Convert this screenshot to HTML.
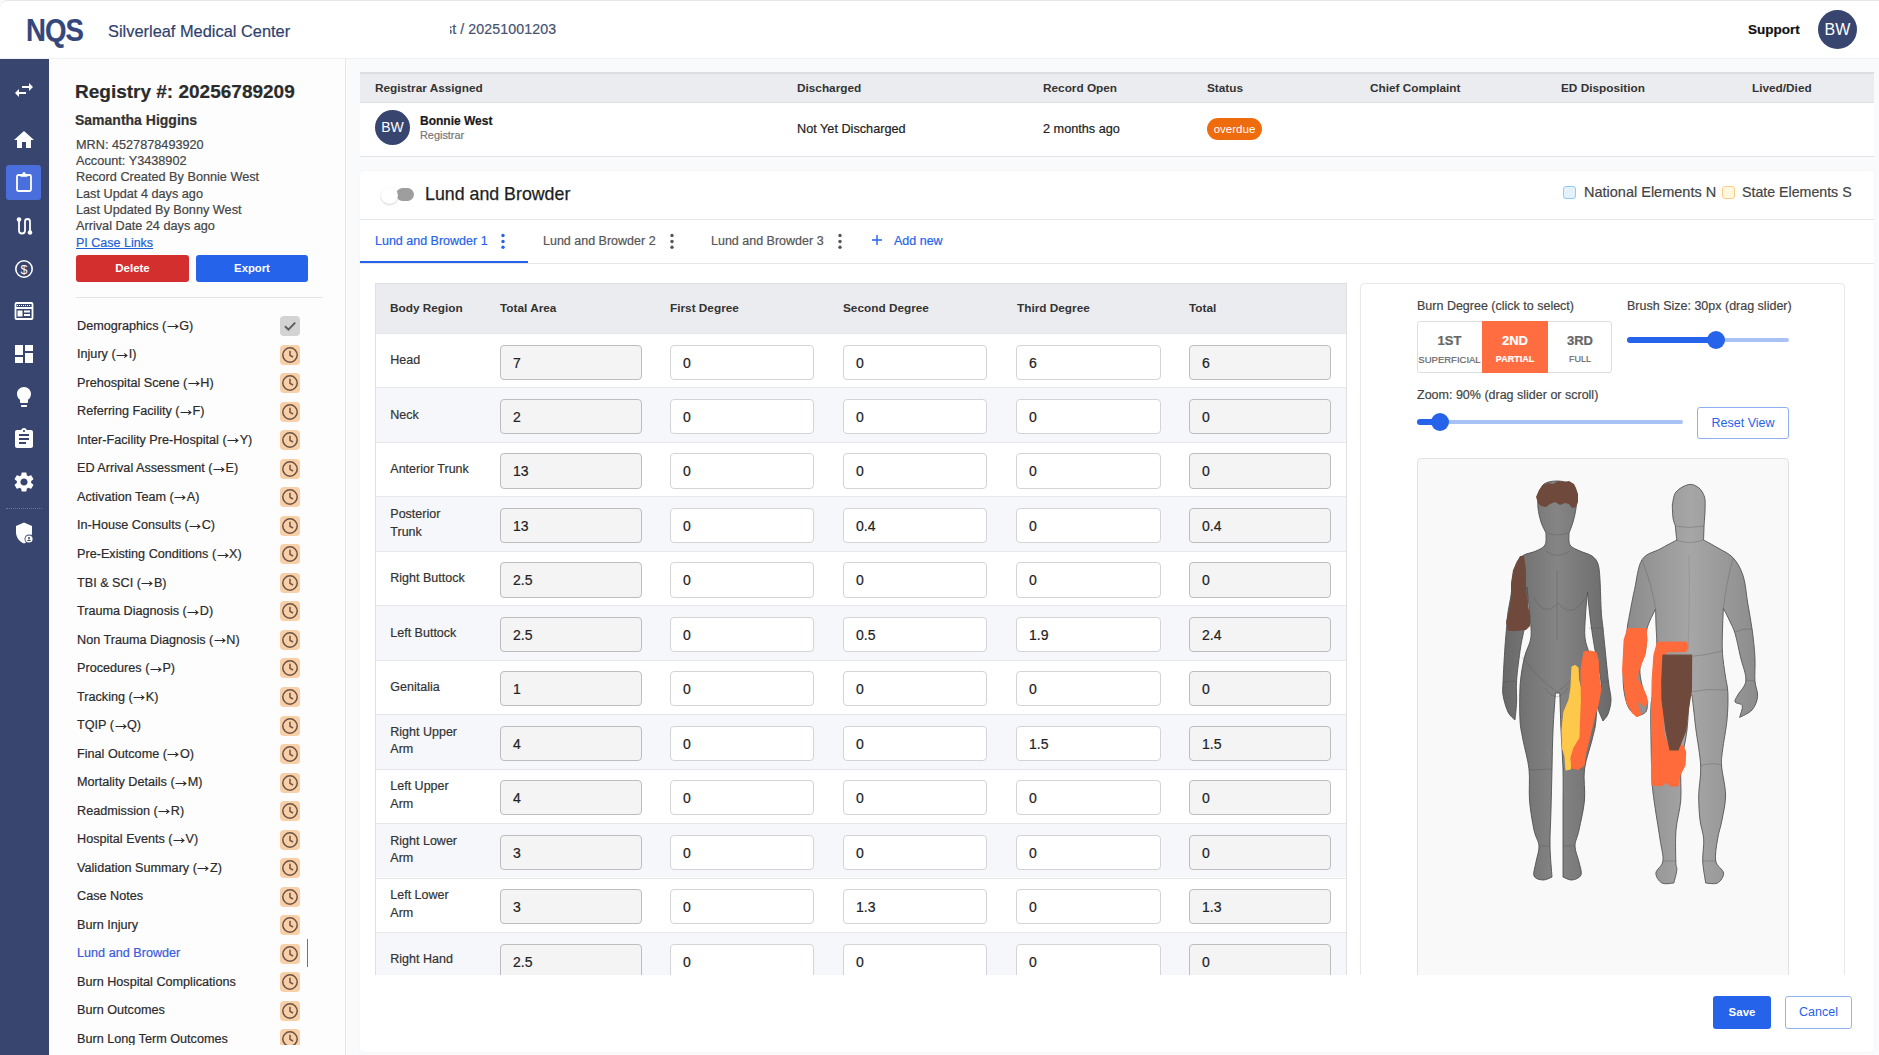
<!DOCTYPE html>
<html><head><meta charset="utf-8">
<style>
*{box-sizing:border-box;margin:0;padding:0}
html,body{width:1879px;height:1055px;overflow:hidden;background:#f9fafc;font-family:"Liberation Sans",sans-serif;color:#333}
.t,.nav,.td,.rl,.inp{-webkit-text-stroke:0.2px currentColor}
.abs{position:absolute}
.t{position:absolute;white-space:nowrap;line-height:1}
#hdr{position:absolute;left:0;top:0;width:1879px;height:59px;background:#fff;border-bottom:1px solid #eef0f4;border-top:1px solid #e8e8e8;border-top-left-radius:8px}
#side{position:absolute;left:0;top:59px;width:49px;height:996px;background:#37456f}
#lp{position:absolute;left:49px;top:59px;width:297px;height:996px;background:#fdfdfe;border-right:1px solid #e3e5ea}
.nav{position:absolute;left:28px;font-size:12.65px;color:#2b2b2b;white-space:nowrap;line-height:1}
.ico{position:absolute;left:231px;width:20px;height:20px;border-radius:4px;background:#f8cfa6}
.ico svg{position:absolute;left:0;top:0}
.ar{display:inline-block;vertical-align:-0.5px;margin:0 0.5px}
.th{position:absolute;font-size:11.8px;font-weight:bold;color:#333;white-space:nowrap;line-height:1}
.td{position:absolute;font-size:12.7px;color:#222;white-space:nowrap;line-height:1}
.inp{position:absolute;height:35.3px;border:1px solid #d4d4d4;border-radius:4px;background:#fff;font-size:14px;color:#222;padding-left:12px;line-height:34px}
.inp.ro{background:#f4f4f4;border-color:#bdbdbd}
.rl{position:absolute;left:14.3px;font-size:12.5px;color:#333;line-height:17.5px}
</style></head><body>

<div id="hdr">
  <div class="t" style="left:25.5px;top:13.6px;font-size:31px;font-weight:bold;color:#34467a;letter-spacing:-1px;transform:scaleX(0.89);transform-origin:0 0">NQS</div>
  <div class="t" style="left:108px;top:22px;font-size:16.4px;color:#2f3f6e">Silverleaf Medical Center</div>
  <div class="abs" style="left:450px;top:17px;width:120px;height:20px;overflow:hidden"><div class="t" style="left:-5px;top:4px;font-size:14.2px;color:#46526e;letter-spacing:0.1px">st / 20251001203</div></div>
  <div class="t" style="left:1748px;top:22px;font-size:13.5px;font-weight:bold;color:#111">Support</div>
  <div class="abs" style="left:1818px;top:9px;width:39px;height:39px;border-radius:50%;background:#37456f;color:#fff;font-size:16px;line-height:40px;text-align:center">BW</div>
</div>

<div id="side"></div>
<div id="lp">
  <div class="t" style="left:26px;top:23px;font-size:19px;font-weight:bold;color:#2b2b2b">Registry #: 20256789209</div>
  <div class="t" style="left:26px;top:54px;font-size:14px;font-weight:bold;color:#333">Samantha Higgins</div>

<div class="t" style="left:27px;top:79.7px;font-size:12.7px;color:#444">MRN: 4527878493920</div>
<div class="t" style="left:27px;top:96.0px;font-size:12.7px;color:#444">Account: Y3438902</div>
<div class="t" style="left:27px;top:112.4px;font-size:12.7px;color:#444">Record Created By Bonnie West</div>
<div class="t" style="left:27px;top:128.7px;font-size:12.7px;color:#444">Last Updat 4 days ago</div>
<div class="t" style="left:27px;top:145.0px;font-size:12.7px;color:#444">Last Updated By Bonny West</div>
<div class="t" style="left:27px;top:161.3px;font-size:12.7px;color:#444">Arrival Date 24 days ago</div>
<div class="t" style="left:27px;top:177.7px;font-size:12.5px;color:#1f5fd6;text-decoration:underline">PI Case Links</div>
<div class="abs" style="left:27px;top:196px;width:113px;height:27px;background:#d32f2f;border-radius:3px;color:#fff;font-size:11.5px;font-weight:bold;text-align:center;line-height:27px">Delete</div>
<div class="abs" style="left:147px;top:196px;width:112px;height:27px;background:#2563eb;border-radius:3px;color:#fff;font-size:11.3px;font-weight:bold;text-align:center;line-height:27px">Export</div>
<div class="abs" style="left:27px;top:238px;width:247px;height:1px;background:#e5e5e5"></div>

<div class="abs" style="left:0;top:0;width:298px;height:986px;overflow:hidden">
<div class="nav" style="top:260.8px;color:#2b2b2b">Demographics (<svg class="ar" width="12" height="8" viewBox="0 0 12 8"><path d="M0.5 4.5H11M8.3 2.3L11 4.5L8.3 6.7" stroke="currentColor" stroke-width="1.05" fill="none"/></svg>G)</div>
<div class="ico" style="top:257.2px;background:#d3d3d3"><svg width="20" height="20" viewBox="0 0 20 20"><path d="M5 10.2L8.4 13.6L15.2 6.6" fill="none" stroke="#5e5e5e" stroke-width="2"/></svg></div>
<div class="nav" style="top:289.3px;color:#2b2b2b">Injury (<svg class="ar" width="12" height="8" viewBox="0 0 12 8"><path d="M0.5 4.5H11M8.3 2.3L11 4.5L8.3 6.7" stroke="currentColor" stroke-width="1.05" fill="none"/></svg>I)</div>
<div class="ico" style="top:285.7px"><svg width="20" height="20" viewBox="0 0 20 20"><circle cx="10" cy="10" r="7.2" fill="none" stroke="#6a5446" stroke-width="1.5"/><path d="M10 5.8V10.3L13 12" fill="none" stroke="#6a5446" stroke-width="1.5"/></svg></div>
<div class="nav" style="top:317.8px;color:#2b2b2b">Prehospital Scene (<svg class="ar" width="12" height="8" viewBox="0 0 12 8"><path d="M0.5 4.5H11M8.3 2.3L11 4.5L8.3 6.7" stroke="currentColor" stroke-width="1.05" fill="none"/></svg>H)</div>
<div class="ico" style="top:314.2px"><svg width="20" height="20" viewBox="0 0 20 20"><circle cx="10" cy="10" r="7.2" fill="none" stroke="#6a5446" stroke-width="1.5"/><path d="M10 5.8V10.3L13 12" fill="none" stroke="#6a5446" stroke-width="1.5"/></svg></div>
<div class="nav" style="top:346.4px;color:#2b2b2b">Referring Facility (<svg class="ar" width="12" height="8" viewBox="0 0 12 8"><path d="M0.5 4.5H11M8.3 2.3L11 4.5L8.3 6.7" stroke="currentColor" stroke-width="1.05" fill="none"/></svg>F)</div>
<div class="ico" style="top:342.8px"><svg width="20" height="20" viewBox="0 0 20 20"><circle cx="10" cy="10" r="7.2" fill="none" stroke="#6a5446" stroke-width="1.5"/><path d="M10 5.8V10.3L13 12" fill="none" stroke="#6a5446" stroke-width="1.5"/></svg></div>
<div class="nav" style="top:374.9px;color:#2b2b2b">Inter-Facility Pre-Hospital (<svg class="ar" width="12" height="8" viewBox="0 0 12 8"><path d="M0.5 4.5H11M8.3 2.3L11 4.5L8.3 6.7" stroke="currentColor" stroke-width="1.05" fill="none"/></svg>Y)</div>
<div class="ico" style="top:371.3px"><svg width="20" height="20" viewBox="0 0 20 20"><circle cx="10" cy="10" r="7.2" fill="none" stroke="#6a5446" stroke-width="1.5"/><path d="M10 5.8V10.3L13 12" fill="none" stroke="#6a5446" stroke-width="1.5"/></svg></div>
<div class="nav" style="top:403.4px;color:#2b2b2b">ED Arrival Assessment (<svg class="ar" width="12" height="8" viewBox="0 0 12 8"><path d="M0.5 4.5H11M8.3 2.3L11 4.5L8.3 6.7" stroke="currentColor" stroke-width="1.05" fill="none"/></svg>E)</div>
<div class="ico" style="top:399.8px"><svg width="20" height="20" viewBox="0 0 20 20"><circle cx="10" cy="10" r="7.2" fill="none" stroke="#6a5446" stroke-width="1.5"/><path d="M10 5.8V10.3L13 12" fill="none" stroke="#6a5446" stroke-width="1.5"/></svg></div>
<div class="nav" style="top:431.9px;color:#2b2b2b">Activation Team (<svg class="ar" width="12" height="8" viewBox="0 0 12 8"><path d="M0.5 4.5H11M8.3 2.3L11 4.5L8.3 6.7" stroke="currentColor" stroke-width="1.05" fill="none"/></svg>A)</div>
<div class="ico" style="top:428.3px"><svg width="20" height="20" viewBox="0 0 20 20"><circle cx="10" cy="10" r="7.2" fill="none" stroke="#6a5446" stroke-width="1.5"/><path d="M10 5.8V10.3L13 12" fill="none" stroke="#6a5446" stroke-width="1.5"/></svg></div>
<div class="nav" style="top:460.4px;color:#2b2b2b">In-House Consults (<svg class="ar" width="12" height="8" viewBox="0 0 12 8"><path d="M0.5 4.5H11M8.3 2.3L11 4.5L8.3 6.7" stroke="currentColor" stroke-width="1.05" fill="none"/></svg>C)</div>
<div class="ico" style="top:456.8px"><svg width="20" height="20" viewBox="0 0 20 20"><circle cx="10" cy="10" r="7.2" fill="none" stroke="#6a5446" stroke-width="1.5"/><path d="M10 5.8V10.3L13 12" fill="none" stroke="#6a5446" stroke-width="1.5"/></svg></div>
<div class="nav" style="top:489.0px;color:#2b2b2b">Pre-Existing Conditions (<svg class="ar" width="12" height="8" viewBox="0 0 12 8"><path d="M0.5 4.5H11M8.3 2.3L11 4.5L8.3 6.7" stroke="currentColor" stroke-width="1.05" fill="none"/></svg>X)</div>
<div class="ico" style="top:485.4px"><svg width="20" height="20" viewBox="0 0 20 20"><circle cx="10" cy="10" r="7.2" fill="none" stroke="#6a5446" stroke-width="1.5"/><path d="M10 5.8V10.3L13 12" fill="none" stroke="#6a5446" stroke-width="1.5"/></svg></div>
<div class="nav" style="top:517.5px;color:#2b2b2b">TBI &amp; SCI (<svg class="ar" width="12" height="8" viewBox="0 0 12 8"><path d="M0.5 4.5H11M8.3 2.3L11 4.5L8.3 6.7" stroke="currentColor" stroke-width="1.05" fill="none"/></svg>B)</div>
<div class="ico" style="top:513.9px"><svg width="20" height="20" viewBox="0 0 20 20"><circle cx="10" cy="10" r="7.2" fill="none" stroke="#6a5446" stroke-width="1.5"/><path d="M10 5.8V10.3L13 12" fill="none" stroke="#6a5446" stroke-width="1.5"/></svg></div>
<div class="nav" style="top:546.0px;color:#2b2b2b">Trauma Diagnosis (<svg class="ar" width="12" height="8" viewBox="0 0 12 8"><path d="M0.5 4.5H11M8.3 2.3L11 4.5L8.3 6.7" stroke="currentColor" stroke-width="1.05" fill="none"/></svg>D)</div>
<div class="ico" style="top:542.4px"><svg width="20" height="20" viewBox="0 0 20 20"><circle cx="10" cy="10" r="7.2" fill="none" stroke="#6a5446" stroke-width="1.5"/><path d="M10 5.8V10.3L13 12" fill="none" stroke="#6a5446" stroke-width="1.5"/></svg></div>
<div class="nav" style="top:574.5px;color:#2b2b2b">Non Trauma Diagnosis (<svg class="ar" width="12" height="8" viewBox="0 0 12 8"><path d="M0.5 4.5H11M8.3 2.3L11 4.5L8.3 6.7" stroke="currentColor" stroke-width="1.05" fill="none"/></svg>N)</div>
<div class="ico" style="top:570.9px"><svg width="20" height="20" viewBox="0 0 20 20"><circle cx="10" cy="10" r="7.2" fill="none" stroke="#6a5446" stroke-width="1.5"/><path d="M10 5.8V10.3L13 12" fill="none" stroke="#6a5446" stroke-width="1.5"/></svg></div>
<div class="nav" style="top:603.0px;color:#2b2b2b">Procedures (<svg class="ar" width="12" height="8" viewBox="0 0 12 8"><path d="M0.5 4.5H11M8.3 2.3L11 4.5L8.3 6.7" stroke="currentColor" stroke-width="1.05" fill="none"/></svg>P)</div>
<div class="ico" style="top:599.4px"><svg width="20" height="20" viewBox="0 0 20 20"><circle cx="10" cy="10" r="7.2" fill="none" stroke="#6a5446" stroke-width="1.5"/><path d="M10 5.8V10.3L13 12" fill="none" stroke="#6a5446" stroke-width="1.5"/></svg></div>
<div class="nav" style="top:631.6px;color:#2b2b2b">Tracking (<svg class="ar" width="12" height="8" viewBox="0 0 12 8"><path d="M0.5 4.5H11M8.3 2.3L11 4.5L8.3 6.7" stroke="currentColor" stroke-width="1.05" fill="none"/></svg>K)</div>
<div class="ico" style="top:628.0px"><svg width="20" height="20" viewBox="0 0 20 20"><circle cx="10" cy="10" r="7.2" fill="none" stroke="#6a5446" stroke-width="1.5"/><path d="M10 5.8V10.3L13 12" fill="none" stroke="#6a5446" stroke-width="1.5"/></svg></div>
<div class="nav" style="top:660.1px;color:#2b2b2b">TQIP (<svg class="ar" width="12" height="8" viewBox="0 0 12 8"><path d="M0.5 4.5H11M8.3 2.3L11 4.5L8.3 6.7" stroke="currentColor" stroke-width="1.05" fill="none"/></svg>Q)</div>
<div class="ico" style="top:656.5px"><svg width="20" height="20" viewBox="0 0 20 20"><circle cx="10" cy="10" r="7.2" fill="none" stroke="#6a5446" stroke-width="1.5"/><path d="M10 5.8V10.3L13 12" fill="none" stroke="#6a5446" stroke-width="1.5"/></svg></div>
<div class="nav" style="top:688.6px;color:#2b2b2b">Final Outcome (<svg class="ar" width="12" height="8" viewBox="0 0 12 8"><path d="M0.5 4.5H11M8.3 2.3L11 4.5L8.3 6.7" stroke="currentColor" stroke-width="1.05" fill="none"/></svg>O)</div>
<div class="ico" style="top:685.0px"><svg width="20" height="20" viewBox="0 0 20 20"><circle cx="10" cy="10" r="7.2" fill="none" stroke="#6a5446" stroke-width="1.5"/><path d="M10 5.8V10.3L13 12" fill="none" stroke="#6a5446" stroke-width="1.5"/></svg></div>
<div class="nav" style="top:717.1px;color:#2b2b2b">Mortality Details (<svg class="ar" width="12" height="8" viewBox="0 0 12 8"><path d="M0.5 4.5H11M8.3 2.3L11 4.5L8.3 6.7" stroke="currentColor" stroke-width="1.05" fill="none"/></svg>M)</div>
<div class="ico" style="top:713.5px"><svg width="20" height="20" viewBox="0 0 20 20"><circle cx="10" cy="10" r="7.2" fill="none" stroke="#6a5446" stroke-width="1.5"/><path d="M10 5.8V10.3L13 12" fill="none" stroke="#6a5446" stroke-width="1.5"/></svg></div>
<div class="nav" style="top:745.6px;color:#2b2b2b">Readmission (<svg class="ar" width="12" height="8" viewBox="0 0 12 8"><path d="M0.5 4.5H11M8.3 2.3L11 4.5L8.3 6.7" stroke="currentColor" stroke-width="1.05" fill="none"/></svg>R)</div>
<div class="ico" style="top:742.0px"><svg width="20" height="20" viewBox="0 0 20 20"><circle cx="10" cy="10" r="7.2" fill="none" stroke="#6a5446" stroke-width="1.5"/><path d="M10 5.8V10.3L13 12" fill="none" stroke="#6a5446" stroke-width="1.5"/></svg></div>
<div class="nav" style="top:774.2px;color:#2b2b2b">Hospital Events (<svg class="ar" width="12" height="8" viewBox="0 0 12 8"><path d="M0.5 4.5H11M8.3 2.3L11 4.5L8.3 6.7" stroke="currentColor" stroke-width="1.05" fill="none"/></svg>V)</div>
<div class="ico" style="top:770.6px"><svg width="20" height="20" viewBox="0 0 20 20"><circle cx="10" cy="10" r="7.2" fill="none" stroke="#6a5446" stroke-width="1.5"/><path d="M10 5.8V10.3L13 12" fill="none" stroke="#6a5446" stroke-width="1.5"/></svg></div>
<div class="nav" style="top:802.7px;color:#2b2b2b">Validation Summary (<svg class="ar" width="12" height="8" viewBox="0 0 12 8"><path d="M0.5 4.5H11M8.3 2.3L11 4.5L8.3 6.7" stroke="currentColor" stroke-width="1.05" fill="none"/></svg>Z)</div>
<div class="ico" style="top:799.1px"><svg width="20" height="20" viewBox="0 0 20 20"><circle cx="10" cy="10" r="7.2" fill="none" stroke="#6a5446" stroke-width="1.5"/><path d="M10 5.8V10.3L13 12" fill="none" stroke="#6a5446" stroke-width="1.5"/></svg></div>
<div class="nav" style="top:831.2px;color:#2b2b2b">Case Notes</div>
<div class="ico" style="top:827.6px"><svg width="20" height="20" viewBox="0 0 20 20"><circle cx="10" cy="10" r="7.2" fill="none" stroke="#6a5446" stroke-width="1.5"/><path d="M10 5.8V10.3L13 12" fill="none" stroke="#6a5446" stroke-width="1.5"/></svg></div>
<div class="nav" style="top:859.7px;color:#2b2b2b">Burn Injury</div>
<div class="ico" style="top:856.1px"><svg width="20" height="20" viewBox="0 0 20 20"><circle cx="10" cy="10" r="7.2" fill="none" stroke="#6a5446" stroke-width="1.5"/><path d="M10 5.8V10.3L13 12" fill="none" stroke="#6a5446" stroke-width="1.5"/></svg></div>
<div class="nav" style="top:888.2px;color:#3b5bdb">Lund and Browder</div>
<div class="ico" style="top:884.6px"><svg width="20" height="20" viewBox="0 0 20 20"><circle cx="10" cy="10" r="7.2" fill="none" stroke="#6a5446" stroke-width="1.5"/><path d="M10 5.8V10.3L13 12" fill="none" stroke="#6a5446" stroke-width="1.5"/></svg></div>
<div class="nav" style="top:916.8px;color:#2b2b2b">Burn Hospital Complications</div>
<div class="ico" style="top:913.2px"><svg width="20" height="20" viewBox="0 0 20 20"><circle cx="10" cy="10" r="7.2" fill="none" stroke="#6a5446" stroke-width="1.5"/><path d="M10 5.8V10.3L13 12" fill="none" stroke="#6a5446" stroke-width="1.5"/></svg></div>
<div class="nav" style="top:945.3px;color:#2b2b2b">Burn Outcomes</div>
<div class="ico" style="top:941.7px"><svg width="20" height="20" viewBox="0 0 20 20"><circle cx="10" cy="10" r="7.2" fill="none" stroke="#6a5446" stroke-width="1.5"/><path d="M10 5.8V10.3L13 12" fill="none" stroke="#6a5446" stroke-width="1.5"/></svg></div>
<div class="nav" style="top:973.8px;color:#2b2b2b">Burn Long Term Outcomes</div>
<div class="ico" style="top:970.2px"><svg width="20" height="20" viewBox="0 0 20 20"><circle cx="10" cy="10" r="7.2" fill="none" stroke="#6a5446" stroke-width="1.5"/><path d="M10 5.8V10.3L13 12" fill="none" stroke="#6a5446" stroke-width="1.5"/></svg></div>
</div>
<div class="abs" style="left:258px;top:880px;width:1px;height:28px;background:#4c6ef5"></div>
</div>
<div class="abs" style="left:360px;top:72px;width:1514px;height:31px;background:#ebecf0;border-top:2px solid #dcdde1"></div>
<div class="abs" style="left:360px;top:102px;width:1514px;height:55px;background:#fff;border-top:1px solid #dfe0e4;border-bottom:1px solid #e2e4e8"></div>
<div class="th" style="left:375px;top:82.7px">Registrar Assigned</div>
<div class="th" style="left:797px;top:82.7px">Discharged</div>
<div class="th" style="left:1043px;top:82.7px">Record Open</div>
<div class="th" style="left:1207px;top:82.7px">Status</div>
<div class="th" style="left:1370px;top:82.7px">Chief Complaint</div>
<div class="th" style="left:1561px;top:82.7px">ED Disposition</div>
<div class="th" style="left:1752px;top:82.7px">Lived/Died</div>
<div class="abs" style="left:375px;top:110px;width:35px;height:35px;border-radius:50%;background:#37456f;color:#fff;font-size:14px;line-height:35px;text-align:center">BW</div>
<div class="t" style="left:420px;top:115px;font-size:12px;font-weight:bold;color:#1a1a1a">Bonnie West</div>
<div class="t" style="left:420px;top:130px;font-size:10.9px;color:#777">Registrar</div>
<div class="td" style="left:797px;top:123px">Not Yet Discharged</div>
<div class="td" style="left:1043px;top:123px">2 months ago</div>
<div class="abs" style="left:1207px;top:118px;width:55px;height:22px;border-radius:11px;background:#ef6c0e;color:#fff;font-size:11.5px;line-height:22px;text-align:center">overdue</div>

<div class="abs" style="left:360px;top:171px;width:1514px;height:881px;background:#fff;border-radius:4px;box-shadow:0 0 2px rgba(0,0,0,0.06)"></div>
<div class="abs" style="left:360px;top:219px;width:1514px;height:1px;background:#e4e6ea"></div>
<div class="abs" style="left:360px;top:263px;width:1514px;height:1px;background:#e4e6ea"></div>
<div class="abs" style="left:396px;top:188px;width:18px;height:13px;border-radius:7px;background:#9e9e9e"></div>
<div class="abs" style="left:381px;top:187px;width:17px;height:17px;border-radius:50%;background:#fff;box-shadow:0 1px 2px rgba(0,0,0,0.18)"></div>
<div class="t" style="left:425px;top:186px;font-size:17.8px;color:#1e1e1e;-webkit-text-stroke:0.25px #1e1e1e">Lund and Browder</div>
<div class="abs" style="left:1563px;top:186px;width:13px;height:13px;border:1.5px solid #90caf9;background:#e3f2fd;border-radius:3px"></div>
<div class="t" style="left:1584px;top:185px;font-size:14.5px;color:#444">National Elements N</div>
<div class="abs" style="left:1722px;top:186px;width:13px;height:13px;border:1.5px solid #ffcc80;background:#fff8e1;border-radius:3px"></div>
<div class="t" style="left:1742px;top:185px;font-size:14.2px;color:#444">State Elements S</div>

<div class="t" style="left:375px;top:234.7px;font-size:12.5px;color:#2563eb">Lund and Browder 1</div>
<svg class="abs" style="left:500px;top:233px" width="6" height="17" viewBox="0 0 6 17"><circle cx="3" cy="2.5" r="1.7" fill="#2563eb"/><circle cx="3" cy="8.5" r="1.7" fill="#2563eb"/><circle cx="3" cy="14.2" r="1.7" fill="#2563eb"/></svg>
<div class="t" style="left:543px;top:234.7px;font-size:12.5px;color:#555">Lund and Browder 2</div>
<svg class="abs" style="left:669px;top:233px" width="6" height="17" viewBox="0 0 6 17"><circle cx="3" cy="2.5" r="1.7" fill="#555"/><circle cx="3" cy="8.5" r="1.7" fill="#555"/><circle cx="3" cy="14.2" r="1.7" fill="#555"/></svg>
<div class="t" style="left:711px;top:234.7px;font-size:12.5px;color:#555">Lund and Browder 3</div>
<svg class="abs" style="left:837px;top:233px" width="6" height="17" viewBox="0 0 6 17"><circle cx="3" cy="2.5" r="1.7" fill="#555"/><circle cx="3" cy="8.5" r="1.7" fill="#555"/><circle cx="3" cy="14.2" r="1.7" fill="#555"/></svg>
<svg class="abs" style="left:871px;top:234px" width="12" height="12" viewBox="0 0 12 12"><path d="M6 1V11M1 6H11" stroke="#2563eb" stroke-width="1.4"/></svg>
<div class="t" style="left:894px;top:234.7px;font-size:12.5px;color:#2563eb">Add new</div>
<div class="abs" style="left:360px;top:261px;width:168px;height:2px;background:#2563eb"></div>
<div class="abs" style="left:375px;top:283px;width:972px;height:692px;overflow:hidden;border-left:1px solid #e0e0e0;border-right:1px solid #e0e0e0">
<div class="abs" style="left:0;top:0;width:972px;height:50px;background:#ebecf0;border-top:1px solid #dcdde1"></div>
<div class="th" style="left:14px;top:19.8px">Body Region</div>
<div class="th" style="left:124px;top:19.8px">Total Area</div>
<div class="th" style="left:294px;top:19.8px">First Degree</div>
<div class="th" style="left:467px;top:19.8px">Second Degree</div>
<div class="th" style="left:641px;top:19.8px">Third Degree</div>
<div class="th" style="left:813px;top:19.8px">Total</div>
<div class="abs" style="left:0;top:50.00px;width:972px;height:54.45px;background:#fff;border-top:1px solid #e6e7ea"></div>
<div class="rl" style="top:69.3px">Head</div>
<div class="inp ro" style="left:124px;top:61.5px;width:142px">7</div>
<div class="inp" style="left:294px;top:61.5px;width:144px">0</div>
<div class="inp" style="left:467px;top:61.5px;width:144px">0</div>
<div class="inp" style="left:640px;top:61.5px;width:145px">6</div>
<div class="inp ro" style="left:813px;top:61.5px;width:142px">6</div>
<div class="abs" style="left:0;top:104.45px;width:972px;height:54.45px;background:#f6f7fa;border-top:1px solid #e6e7ea"></div>
<div class="rl" style="top:123.8px">Neck</div>
<div class="inp ro" style="left:124px;top:116.0px;width:142px">2</div>
<div class="inp" style="left:294px;top:116.0px;width:144px">0</div>
<div class="inp" style="left:467px;top:116.0px;width:144px">0</div>
<div class="inp" style="left:640px;top:116.0px;width:145px">0</div>
<div class="inp ro" style="left:813px;top:116.0px;width:142px">0</div>
<div class="abs" style="left:0;top:158.90px;width:972px;height:54.45px;background:#fff;border-top:1px solid #e6e7ea"></div>
<div class="rl" style="top:178.2px">Anterior Trunk</div>
<div class="inp ro" style="left:124px;top:170.4px;width:142px">13</div>
<div class="inp" style="left:294px;top:170.4px;width:144px">0</div>
<div class="inp" style="left:467px;top:170.4px;width:144px">0</div>
<div class="inp" style="left:640px;top:170.4px;width:145px">0</div>
<div class="inp ro" style="left:813px;top:170.4px;width:142px">0</div>
<div class="abs" style="left:0;top:213.35px;width:972px;height:54.45px;background:#f6f7fa;border-top:1px solid #e6e7ea"></div>
<div class="rl" style="top:223.1px">Posterior<br>Trunk</div>
<div class="inp ro" style="left:124px;top:224.9px;width:142px">13</div>
<div class="inp" style="left:294px;top:224.9px;width:144px">0</div>
<div class="inp" style="left:467px;top:224.9px;width:144px">0.4</div>
<div class="inp" style="left:640px;top:224.9px;width:145px">0</div>
<div class="inp ro" style="left:813px;top:224.9px;width:142px">0.4</div>
<div class="abs" style="left:0;top:267.80px;width:972px;height:54.45px;background:#fff;border-top:1px solid #e6e7ea"></div>
<div class="rl" style="top:287.1px">Right Buttock</div>
<div class="inp ro" style="left:124px;top:279.3px;width:142px">2.5</div>
<div class="inp" style="left:294px;top:279.3px;width:144px">0</div>
<div class="inp" style="left:467px;top:279.3px;width:144px">0</div>
<div class="inp" style="left:640px;top:279.3px;width:145px">0</div>
<div class="inp ro" style="left:813px;top:279.3px;width:142px">0</div>
<div class="abs" style="left:0;top:322.25px;width:972px;height:54.45px;background:#f6f7fa;border-top:1px solid #e6e7ea"></div>
<div class="rl" style="top:341.6px">Left Buttock</div>
<div class="inp ro" style="left:124px;top:333.8px;width:142px">2.5</div>
<div class="inp" style="left:294px;top:333.8px;width:144px">0</div>
<div class="inp" style="left:467px;top:333.8px;width:144px">0.5</div>
<div class="inp" style="left:640px;top:333.8px;width:145px">1.9</div>
<div class="inp ro" style="left:813px;top:333.8px;width:142px">2.4</div>
<div class="abs" style="left:0;top:376.70px;width:972px;height:54.45px;background:#fff;border-top:1px solid #e6e7ea"></div>
<div class="rl" style="top:396.0px">Genitalia</div>
<div class="inp ro" style="left:124px;top:388.2px;width:142px">1</div>
<div class="inp" style="left:294px;top:388.2px;width:144px">0</div>
<div class="inp" style="left:467px;top:388.2px;width:144px">0</div>
<div class="inp" style="left:640px;top:388.2px;width:145px">0</div>
<div class="inp ro" style="left:813px;top:388.2px;width:142px">0</div>
<div class="abs" style="left:0;top:431.15px;width:972px;height:54.45px;background:#f6f7fa;border-top:1px solid #e6e7ea"></div>
<div class="rl" style="top:440.9px">Right Upper<br>Arm</div>
<div class="inp ro" style="left:124px;top:442.7px;width:142px">4</div>
<div class="inp" style="left:294px;top:442.7px;width:144px">0</div>
<div class="inp" style="left:467px;top:442.7px;width:144px">0</div>
<div class="inp" style="left:640px;top:442.7px;width:145px">1.5</div>
<div class="inp ro" style="left:813px;top:442.7px;width:142px">1.5</div>
<div class="abs" style="left:0;top:485.60px;width:972px;height:54.45px;background:#fff;border-top:1px solid #e6e7ea"></div>
<div class="rl" style="top:495.3px">Left Upper<br>Arm</div>
<div class="inp ro" style="left:124px;top:497.1px;width:142px">4</div>
<div class="inp" style="left:294px;top:497.1px;width:144px">0</div>
<div class="inp" style="left:467px;top:497.1px;width:144px">0</div>
<div class="inp" style="left:640px;top:497.1px;width:145px">0</div>
<div class="inp ro" style="left:813px;top:497.1px;width:142px">0</div>
<div class="abs" style="left:0;top:540.05px;width:972px;height:54.45px;background:#f6f7fa;border-top:1px solid #e6e7ea"></div>
<div class="rl" style="top:549.8px">Right Lower<br>Arm</div>
<div class="inp ro" style="left:124px;top:551.5px;width:142px">3</div>
<div class="inp" style="left:294px;top:551.5px;width:144px">0</div>
<div class="inp" style="left:467px;top:551.5px;width:144px">0</div>
<div class="inp" style="left:640px;top:551.5px;width:145px">0</div>
<div class="inp ro" style="left:813px;top:551.5px;width:142px">0</div>
<div class="abs" style="left:0;top:594.50px;width:972px;height:54.45px;background:#fff;border-top:1px solid #e6e7ea"></div>
<div class="rl" style="top:604.2px">Left Lower<br>Arm</div>
<div class="inp ro" style="left:124px;top:606.0px;width:142px">3</div>
<div class="inp" style="left:294px;top:606.0px;width:144px">0</div>
<div class="inp" style="left:467px;top:606.0px;width:144px">1.3</div>
<div class="inp" style="left:640px;top:606.0px;width:145px">0</div>
<div class="inp ro" style="left:813px;top:606.0px;width:142px">1.3</div>
<div class="abs" style="left:0;top:648.95px;width:972px;height:54.45px;background:#f6f7fa;border-top:1px solid #e6e7ea"></div>
<div class="rl" style="top:668.3px">Right Hand</div>
<div class="inp ro" style="left:124px;top:660.5px;width:142px">2.5</div>
<div class="inp" style="left:294px;top:660.5px;width:144px">0</div>
<div class="inp" style="left:467px;top:660.5px;width:144px">0</div>
<div class="inp" style="left:640px;top:660.5px;width:145px">0</div>
<div class="inp ro" style="left:813px;top:660.5px;width:142px">0</div>
</div>
<div class="abs" style="left:1360px;top:283px;width:485px;height:692px;overflow:hidden"><div class="abs" style="left:0;top:0;width:485px;height:720px;border:1px solid #e8e8ea;border-radius:4px;background:#fff"></div><div class="abs" style="left:57px;top:175px;width:372px;height:560px;border:1px solid #e2e2e2;border-radius:4px;background:#f9f9f9"></div></div>
<div class="t" style="left:1417px;top:300px;font-size:12.5px;color:#444">Burn Degree (click to select)</div>
<div class="t" style="left:1627px;top:300px;font-size:12.5px;color:#444">Brush Size: 30px (drag slider)</div>
<div class="abs" style="left:1417px;top:321px;width:195px;height:52px;border:1px solid #dedede;border-radius:3px;background:#fff"></div>
<div class="abs" style="left:1482px;top:321px;width:66px;height:52px;background:#ff6d40"></div>
<div class="t" style="left:1417px;top:334px;width:65px;text-align:center;font-size:13px;font-weight:bold;color:#666">1ST</div>
<div class="t" style="left:1417px;top:355px;width:65px;text-align:center;font-size:9.5px;color:#666">SUPERFICIAL</div>
<div class="t" style="left:1482px;top:334px;width:66px;text-align:center;font-size:13px;font-weight:bold;color:#fff">2ND</div>
<div class="t" style="left:1482px;top:355px;width:66px;text-align:center;font-size:9px;font-weight:bold;color:#fff">PARTIAL</div>
<div class="t" style="left:1548px;top:334px;width:64px;text-align:center;font-size:13px;font-weight:bold;color:#666">3RD</div>
<div class="t" style="left:1548px;top:355px;width:64px;text-align:center;font-size:9px;color:#666">FULL</div>
<div class="abs" style="left:1627px;top:338px;width:162px;height:4px;border-radius:2px;background:#a9c2f6"></div>
<div class="abs" style="left:1627px;top:337px;width:90px;height:6px;border-radius:3px;background:#2563eb"></div>
<div class="abs" style="left:1707px;top:331px;width:18px;height:18px;border-radius:50%;background:#2563eb"></div>
<div class="t" style="left:1417px;top:389px;font-size:12.5px;color:#444">Zoom: 90% (drag slider or scroll)</div>
<div class="abs" style="left:1417px;top:420px;width:266px;height:4px;border-radius:2px;background:#a9c2f6"></div>
<div class="abs" style="left:1417px;top:419px;width:24px;height:6px;border-radius:3px;background:#2563eb"></div>
<div class="abs" style="left:1431px;top:413px;width:18px;height:18px;border-radius:50%;background:#2563eb"></div>
<div class="abs" style="left:1697px;top:407px;width:92px;height:32px;border:1px solid #8eb0f2;border-radius:3px;background:#fff;color:#2563eb;font-size:12.5px;text-align:center;line-height:30px">Reset View</div>


<svg class="abs" style="left:1417px;top:458px" width="372" height="517" viewBox="1417 458 372 517">
<defs>
<linearGradient id="gf" x1="0" y1="0" x2="1" y2="0"><stop offset="0" stop-color="#686868"/><stop offset="0.5" stop-color="#858585"/><stop offset="1" stop-color="#6a6a6a"/></linearGradient>
<linearGradient id="gm" x1="0" y1="0" x2="1" y2="0"><stop offset="0" stop-color="#8a8a8a"/><stop offset="0.5" stop-color="#a6a6a6"/><stop offset="1" stop-color="#8c8c8c"/></linearGradient>
</defs>
<path d="M1538.0,495.0 C1539.0,493.2 1540.8,486.3 1544.0,484.0 C1547.2,481.7 1552.7,481.0 1557.0,481.0 C1561.3,481.0 1566.8,481.7 1570.0,484.0 C1573.2,486.3 1575.0,491.0 1576.0,495.0 C1577.0,499.0 1576.5,503.5 1576.0,508.0 C1575.5,512.5 1574.2,517.8 1573.0,522.0 C1571.8,526.2 1569.7,531.2 1569.0,533.0 L1569.0,533.0 C1569.2,535.0 1568.2,542.0 1570.0,545.0 C1571.8,548.0 1576.3,549.2 1580.0,551.0 C1583.7,552.8 1589.0,553.8 1592.0,556.0 C1595.0,558.2 1596.7,560.0 1598.0,564.0 C1599.3,568.0 1599.5,572.0 1600.0,580.0 C1600.5,588.0 1600.8,604.0 1601.3,612.0 C1601.8,620.0 1602.4,622.0 1603.0,628.0 C1603.6,634.0 1604.1,639.0 1605.0,648.0 C1605.9,657.0 1607.5,673.3 1608.5,682.0 C1609.5,690.7 1611.1,694.7 1611.0,700.0 C1610.9,705.3 1609.3,710.5 1608.0,714.0 C1606.7,717.5 1603.8,719.8 1603.0,721.0 L1603.0,721.0 C1602.2,718.8 1598.8,712.3 1598.0,708.0 C1597.2,703.7 1597.5,699.3 1598.0,695.0 C1598.5,690.7 1601.5,689.5 1601.0,682.0 C1600.5,674.5 1596.6,659.0 1595.0,650.0 C1593.4,641.0 1592.4,634.3 1591.5,628.0 C1590.6,621.7 1590.2,618.0 1589.5,612.0 C1588.8,606.0 1587.8,595.3 1587.5,592.0 L1587.5,592.0 C1587.2,595.8 1585.9,607.3 1585.5,615.0 C1585.1,622.7 1584.2,631.2 1585.0,638.0 C1585.8,644.8 1588.0,648.3 1590.0,656.0 C1592.0,663.7 1596.0,673.3 1597.0,684.0 C1598.0,694.7 1596.8,710.7 1596.0,720.0 C1595.2,729.3 1593.9,731.8 1592.0,740.0 C1590.1,748.2 1585.8,759.0 1584.5,769.0 C1583.2,779.0 1585.4,789.8 1584.5,800.0 C1583.6,810.2 1580.6,822.3 1579.0,830.0 C1577.4,837.7 1575.0,840.7 1575.0,846.0 C1575.0,851.3 1578.0,857.2 1579.0,862.0 C1580.0,866.8 1582.2,872.0 1581.0,875.0 C1579.8,878.0 1575.0,879.7 1572.0,880.0 C1569.0,880.3 1564.5,877.5 1563.0,877.0 L1563.0,877.0 C1563.0,871.8 1563.0,857.2 1563.0,846.0 C1563.0,834.8 1563.0,822.8 1563.0,810.0 C1563.0,797.2 1563.3,782.3 1563.0,769.0 C1562.7,755.7 1561.5,742.7 1561.0,730.0 C1560.5,717.3 1560.0,699.2 1559.8,693.0 L1555.4,693.0 C1555.0,699.2 1553.6,717.3 1553.0,730.0 C1552.4,742.7 1552.3,755.7 1552.0,769.0 C1551.7,782.3 1551.3,797.2 1551.0,810.0 C1550.7,822.8 1549.8,834.8 1550.0,846.0 C1550.2,857.2 1551.7,871.8 1552.0,877.0 L1552.0,877.0 C1550.5,877.5 1546.0,880.2 1543.0,880.0 C1540.0,879.8 1535.2,879.0 1534.0,876.0 C1532.8,873.0 1535.2,867.0 1536.0,862.0 C1536.8,857.0 1539.3,851.3 1539.0,846.0 C1538.7,840.7 1535.6,837.7 1534.0,830.0 C1532.4,822.3 1530.3,810.2 1529.5,800.0 C1528.7,789.8 1530.1,779.0 1529.0,769.0 C1527.9,759.0 1524.5,748.2 1523.0,740.0 C1521.5,731.8 1520.5,729.3 1520.0,720.0 C1519.5,710.7 1519.5,694.5 1520.2,684.0 C1521.0,673.5 1522.7,664.8 1524.5,657.0 C1526.3,649.2 1530.2,644.5 1531.0,637.0 C1531.8,629.5 1530.2,620.3 1529.5,612.0 C1528.8,603.7 1527.4,591.2 1527.0,587.0 L1527.0,587.0 C1527.1,591.2 1527.9,605.2 1527.5,612.0 C1527.1,618.8 1525.7,622.0 1524.5,628.0 C1523.3,634.0 1521.8,639.2 1520.5,648.0 C1519.2,656.8 1517.2,671.5 1516.6,680.5 C1515.9,689.5 1516.9,695.4 1516.6,702.0 C1516.3,708.6 1515.3,717.0 1515.0,720.0 L1515.0,720.0 C1513.8,718.7 1510.0,716.2 1508.0,712.0 C1506.0,707.8 1503.8,700.2 1503.0,695.0 C1502.2,689.8 1502.8,688.3 1503.1,680.5 C1503.4,672.7 1504.3,657.0 1504.9,648.0 C1505.5,639.0 1506.2,632.5 1506.7,626.5 C1507.2,620.5 1507.2,617.4 1508.0,612.0 C1508.8,606.6 1510.4,600.0 1511.2,594.0 C1512.0,588.0 1512.0,581.3 1513.0,576.0 C1514.0,570.7 1515.2,565.5 1517.0,562.0 C1518.8,558.5 1520.8,556.8 1524.0,555.0 C1527.2,553.2 1532.5,552.7 1536.0,551.0 C1539.5,549.3 1543.3,548.0 1545.0,545.0 C1546.7,542.0 1545.8,535.0 1546.0,533.0 L1546.0,533.0 C1545.2,531.2 1542.3,526.2 1541.0,522.0 C1539.7,517.8 1538.5,512.5 1538.0,508.0 C1537.5,503.5 1538.0,497.2 1538.0,495.0 Z" fill="url(#gf)" stroke="#505050" stroke-width="0.9"/>
<path d="M1672.3,505.0 C1672.9,502.8 1673.3,495.4 1676.0,492.0 C1678.7,488.6 1684.9,485.2 1688.7,484.5 C1692.5,483.8 1696.4,485.9 1699.0,488.0 C1701.6,490.1 1703.5,493.7 1704.5,497.0 C1705.5,500.3 1705.1,504.5 1705.1,508.0 C1705.1,511.5 1704.8,515.0 1704.6,518.0 C1704.4,521.0 1704.2,524.4 1704.1,525.7 L1704.1,525.7 C1704.0,526.9 1703.9,530.6 1703.8,533.0 C1703.7,535.4 1703.6,538.8 1703.6,540.0 L1703.6,540.0 C1706.0,541.3 1713.0,545.0 1718.0,548.0 C1723.0,551.0 1729.1,553.3 1733.3,558.0 C1737.5,562.7 1740.8,568.5 1743.2,576.0 C1745.6,583.5 1746.2,594.0 1747.7,603.0 C1749.2,612.0 1751.0,621.0 1752.2,630.0 C1753.4,639.0 1754.5,648.6 1754.9,657.0 C1755.4,665.4 1754.5,673.9 1754.9,680.5 C1755.4,687.1 1758.1,691.8 1757.6,696.7 C1757.1,701.6 1755.0,706.5 1752.0,710.0 C1749.0,713.5 1741.7,716.2 1739.6,717.4 L1739.6,717.4 C1740.0,715.5 1743.0,708.3 1742.3,705.7 C1741.5,703.1 1735.8,703.8 1735.1,702.0 C1734.3,700.2 1736.0,698.5 1737.8,694.9 C1739.6,691.3 1745.5,686.8 1745.9,680.5 C1746.4,674.2 1742.3,664.8 1740.5,657.0 C1738.7,649.2 1736.9,639.6 1735.1,633.6 C1733.3,627.6 1731.7,625.2 1729.7,621.0 C1727.8,616.8 1724.5,610.5 1723.4,608.4 L1723.4,608.4 C1723.2,612.0 1722.7,622.5 1722.5,630.0 C1722.3,637.5 1722.0,646.0 1722.5,653.5 C1723.0,661.0 1724.3,668.4 1725.2,675.0 C1726.1,681.6 1727.6,685.5 1727.9,693.0 C1728.2,700.5 1727.9,710.5 1727.0,720.0 C1726.1,729.5 1723.5,742.3 1722.6,750.0 C1721.7,757.7 1721.1,758.5 1721.6,766.0 C1722.1,773.5 1725.5,786.0 1725.6,795.0 C1725.7,804.0 1723.3,812.7 1722.0,820.0 C1720.7,827.3 1718.6,832.2 1717.6,839.0 C1716.5,845.8 1714.7,855.3 1715.7,861.0 C1716.7,866.7 1723.3,869.3 1723.6,873.0 C1723.9,876.7 1720.6,881.3 1717.6,883.0 C1714.6,884.7 1707.7,883.0 1705.7,883.0 L1705.7,883.0 C1705.2,879.3 1703.0,868.3 1702.7,861.0 C1702.4,853.7 1704.2,845.8 1703.7,839.0 C1703.2,832.2 1700.8,827.3 1700.0,820.0 C1699.2,812.7 1698.6,804.0 1698.7,795.0 C1698.8,786.0 1701.2,776.8 1700.7,766.0 C1700.2,755.2 1697.2,739.3 1696.0,730.0 C1694.8,720.7 1694.4,715.8 1693.7,710.0 C1693.0,704.2 1692.3,697.5 1692.0,695.0 L1689.0,695.0 C1688.7,700.8 1688.3,718.2 1687.0,730.0 C1685.7,741.8 1682.0,754.3 1681.0,766.0 C1680.0,777.7 1681.6,789.3 1680.8,800.0 C1680.0,810.7 1676.8,819.8 1676.0,830.0 C1675.2,840.2 1675.7,854.3 1675.8,861.0 C1675.9,867.7 1677.1,866.3 1676.8,870.0 C1676.5,873.7 1674.3,880.8 1673.8,883.0 L1673.8,883.0 C1671.8,883.0 1664.9,884.7 1661.9,883.0 C1658.9,881.3 1655.7,876.7 1655.9,873.0 C1656.1,869.3 1662.2,866.7 1662.9,861.0 C1663.6,855.3 1661.5,849.2 1660.0,839.0 C1658.5,828.8 1655.3,809.9 1654.0,800.0 C1652.7,790.1 1652.5,789.6 1652.0,779.6 C1651.5,769.6 1651.2,752.4 1651.0,740.0 C1650.8,727.6 1650.5,713.3 1651.0,705.0 C1651.5,696.7 1653.2,696.2 1654.0,690.0 C1654.8,683.8 1655.5,675.8 1656.0,668.0 C1656.5,660.2 1656.8,650.7 1656.8,643.5 C1656.8,636.3 1656.2,630.8 1656.0,625.0 C1655.8,619.2 1655.7,611.7 1655.6,609.0 L1655.6,609.0 C1654.2,612.3 1648.7,621.7 1647.0,628.7 C1645.3,635.7 1646.9,644.5 1645.7,651.0 C1644.5,657.5 1640.6,662.3 1640.0,668.0 C1639.4,673.7 1640.8,679.3 1642.0,685.0 C1643.2,690.7 1646.4,697.5 1647.0,702.0 C1647.6,706.5 1647.4,709.6 1645.7,712.0 C1644.0,714.4 1638.5,715.5 1637.1,716.2 L1637.1,716.2 C1635.7,714.8 1630.8,712.3 1628.5,707.6 C1626.2,702.9 1624.4,695.3 1623.6,687.9 C1622.8,680.5 1623.0,672.9 1623.6,663.0 C1624.2,653.1 1626.2,636.9 1627.2,628.7 C1628.2,620.5 1628.5,620.6 1629.7,614.0 C1630.9,607.4 1632.5,598.3 1634.6,589.3 C1636.6,580.2 1637.8,566.4 1642.0,559.7 C1646.2,553.0 1654.2,552.3 1660.0,549.0 C1665.8,545.7 1674.0,541.5 1676.8,540.0 L1676.8,540.0 C1676.7,538.8 1676.2,535.4 1676.0,533.0 C1675.8,530.6 1675.4,526.9 1675.3,525.7 L1675.3,525.7 C1674.9,524.4 1673.5,521.5 1673.0,518.0 C1672.5,514.5 1672.4,507.2 1672.3,505.0 Z" fill="url(#gm)" stroke="#555" stroke-width="0.9"/>
<g fill="none" stroke="#4a4a4a" stroke-width="0.7" opacity="0.4">
<path d="M1676,540 Q1689,545 1703.6,540"/><path d="M1675.5,526 Q1689,529 1704,526"/><path d="M1642,560 Q1652,585 1655.6,609"/><path d="M1733,558 Q1726,585 1723.4,608"/>
<path d="M1657,655 Q1690,660 1722,651"/><path d="M1690,692 Q1708,688 1727,690"/><path d="M1735,632 Q1744,628 1752,629"/>
<path d="M1745,680 L1755,681"/><path d="M1700,766 Q1711,762 1722,765"/><path d="M1703,861 L1716,861"/><path d="M1663,861 L1676,861"/>
<path d="M1689,555 Q1690,600 1688,650" opacity="0.5"/>
<path d="M1548,533 Q1557,537 1568,533"/><path d="M1522,657 Q1540,680 1557,692 Q1575,680 1591,656"/><path d="M1545,688 Q1557,705 1568,688"/>
<path d="M1534,598 Q1545,618 1558,603"/><path d="M1558,603 Q1572,620 1585,598"/><path d="M1557,570 L1557,640"/>
<path d="M1506,628 L1527,626"/><path d="M1589,628 L1603,628"/><path d="M1503,682 L1516,681"/><path d="M1601,682 L1609,682"/>
<path d="M1529,770 L1552,769"/><path d="M1563,769 L1584,769"/><path d="M1539,846 L1550,846"/><path d="M1563,846 L1575,846"/>
<path d="M1546,551 Q1557,560 1570,551"/>
</g>
<path d="M1536,497 L1539,490 L1543,485 L1548,483 L1553,484 L1558,481 L1564,482 L1569,481 L1574,484 L1576,488 L1578,494 L1578,502 L1576,507 L1572,508 L1569,504 L1565,503 L1560,505 L1555,502 L1550,504 L1546,507 L1541,506 L1538,503 Z" fill="#6f4a3c"/>
<path d="M1520,556 L1524,556 L1526,570 L1526,590 L1528,605 L1530,615 L1530,626 L1526,630 L1516,631 L1508,631 L1506,622 L1509,610 L1511,598 L1511,583 L1513,570 Z" fill="#6f4a3c"/>
<path d="M1572,667 L1575,665.5 L1578,668 L1578.5,680 L1581,690 L1581,745 L1575,748 L1571,756 L1570.5,769 L1566,770 L1565,756 L1562.5,748 L1562,730 L1564,712 L1569,700 L1571,688 Z" fill="#fec84a" stroke="#fec84a" stroke-width="1.2" stroke-linejoin="round"/>
<path d="M1584,652 L1590,651 L1596,652.5 L1598,660 L1599,675 L1600.7,690 L1598,705 L1594.6,716 L1590,735 L1585.5,753.7 L1584,765 L1578,769.5 L1572,768 L1571,758 L1574,748 L1580,738 L1581.5,700 L1581,670 Z" fill="#ff6b3a" stroke="#ff6b3a" stroke-width="1.2" stroke-linejoin="round"/>
<path d="M1627.8,628.6 L1646,628.6 L1647,640 L1644.6,655.2 L1638.6,670.3 L1637,679.4 L1641.6,685.5 L1646.2,696.1 L1647.7,702.2 L1644.6,706 L1640.8,703.7 L1636,699 L1638.6,708.2 L1640.8,714.3 L1637,716.6 L1632.5,712.8 L1627.2,703.7 L1624.9,690 L1622.7,670.3 L1624.2,640 Z" fill="#ff6b3a" stroke="#ff6b3a" stroke-width="1.2" stroke-linejoin="round"/>
<path d="M1657.5,642.3 L1686,642 L1688,646.5 L1686,651.4 L1666,652 L1665,660 L1662.5,700 L1664,735 L1668,745 L1678,745 L1683,746 L1685.6,752 L1685,765 L1680,775 L1678,786 L1670,786 L1667,782 L1662,785.6 L1652,785 L1651.5,770 L1652.5,745 L1651.5,720 L1652.2,680 L1654,655 Z" fill="#ff6b3a" stroke="#ff6b3a" stroke-width="1.2" stroke-linejoin="round"/>
<path d="M1663,655.2 L1691.6,655.2 L1691.4,690 L1688,712 L1685.6,731 L1680,745 L1678,750 L1670,750 L1666,731 L1662,700 L1661.8,680 Z" fill="#6f4a3c" stroke="#6f4a3c" stroke-width="1.2" stroke-linejoin="round"/>
</svg>

<div class="abs" style="left:1713px;top:996px;width:58px;height:33px;background:#2563eb;border-radius:3px;color:#fff;font-size:11.5px;font-weight:bold;text-align:center;line-height:33px">Save</div>
<div class="abs" style="left:1785px;top:996px;width:67px;height:33px;border:1px solid #93b4f0;border-radius:3px;background:#fff;color:#2563eb;font-size:12.5px;text-align:center;line-height:31px">Cancel</div>

<div class="abs" style="left:0;top:0;width:49px;height:1055px;pointer-events:none"><div class="abs" style="left:6px;top:165px;width:35px;height:35px;border-radius:3px;background:#4a6edb"></div><svg class="abs" style="left:12px;top:78px" width="24" height="24" viewBox="0 0 24 24"><path d="M6.99 11L3 15l3.99 4v-3H14v-2H6.99v-3zM21 9l-3.99-4v3H10v2h7.01v3L21 9z" fill="#fff"/></svg><svg class="abs" style="left:12px;top:128px" width="24" height="24" viewBox="0 0 24 24"><path d="M10 20v-6h4v6h5v-8h3L12 3 2 12h3v8z" fill="#fff"/></svg><svg class="abs" style="left:12px;top:170px" width="24" height="24" viewBox="0 0 24 24"><rect x="5" y="5" width="14" height="16" rx="1.5" fill="none" stroke="#fff" stroke-width="1.8"/><path d="M8.5 4.2h7v2.6h-7z" fill="#fff"/><circle cx="12" cy="3.6" r="1.6" fill="#fff"/></svg><svg class="abs" style="left:12px;top:214px" width="24" height="24" viewBox="0 0 24 24"><path d="M7 6V16.5a3 3 0 0 0 6 0V7.5a2.5 2.5 0 0 1 5 0V18" fill="none" stroke="#fff" stroke-width="1.8"/><circle cx="7" cy="5.5" r="2.3" fill="#fff"/><circle cx="18" cy="18.5" r="2.3" fill="#fff"/></svg><svg class="abs" style="left:12px;top:257px" width="24" height="24" viewBox="0 0 24 24"><circle cx="12" cy="12" r="8.2" fill="none" stroke="#fff" stroke-width="1.6"/><text x="12" y="16.6" text-anchor="middle" font-size="12.5" font-family="Liberation Sans" fill="#fff">$</text></svg><svg class="abs" style="left:12px;top:299px" width="24" height="24" viewBox="0 0 24 24"><rect x="3.5" y="4" width="17" height="16" rx="1" fill="none" stroke="#fff" stroke-width="1.8"/><path d="M3.5 9h17M12 12.5h6M12 16h6" stroke="#fff" stroke-width="1.8"/><rect x="5.5" y="11.5" width="5" height="6" fill="#fff"/><path d="M5 6.5h14" stroke="#fff" stroke-width="1" stroke-dasharray="1 1"/></svg><svg class="abs" style="left:12px;top:342px" width="24" height="24" viewBox="0 0 24 24"><path d="M3 13h8V3H3v10zm0 8h8v-6H3v6zm10 0h8V11h-8v10zm0-18v6h8V3h-8z" fill="#fff"/></svg><svg class="abs" style="left:12px;top:385px" width="24" height="24" viewBox="0 0 24 24"><path d="M9 21c0 .55.45 1 1 1h4c.55 0 1-.45 1-1v-1H9v1zm3-19C8.14 2 5 5.14 5 9c0 2.38 1.19 4.47 3 5.74V17c0 .55.45 1 1 1h6c.55 0 1-.45 1-1v-2.26c1.81-1.27 3-3.36 3-5.74 0-3.86-3.14-7-7-7z" fill="#fff"/></svg><svg class="abs" style="left:12px;top:427px" width="24" height="24" viewBox="0 0 24 24"><path d="M19 3h-4.18C14.4 1.84 13.3 1 12 1c-1.3 0-2.4.84-2.82 2H5c-1.1 0-2 .9-2 2v14c0 1.1.9 2 2 2h14c1.1 0 2-.9 2-2V5c0-1.1-.9-2-2-2zm-7 0c.55 0 1 .45 1 1s-.45 1-1 1-1-.45-1-1 .45-1 1-1zm2 14H7v-2h7v2zm3-4H7v-2h10v2zm0-4H7V7h10v2z" fill="#fff"/></svg><svg class="abs" style="left:12px;top:470px" width="24" height="24" viewBox="0 0 24 24"><path d="M19.14 12.94c.04-.3.06-.61.06-.94 0-.32-.02-.64-.07-.94l2.03-1.58c.18-.14.23-.41.12-.61l-1.92-3.32c-.12-.22-.37-.29-.59-.22l-2.39.96c-.5-.38-1.03-.7-1.62-.94l-.36-2.54c-.04-.24-.24-.41-.48-.41h-3.84c-.24 0-.43.17-.47.41l-.36 2.54c-.59.24-1.130.57-1.62.94l-2.39-.96c-.22-.08-.47 0-.59.22L2.74 8.87c-.12.21-.08.47.12.61l2.03 1.58c-.05.3-.09.63-.09.94s.02.64.07.94l-2.03 1.58c-.18.14-.23.41-.12.61l1.92 3.32c.12.22.37.29.59.22l2.39-.96c.5.38 1.03.7 1.62.94l.36 2.54c.05.24.24.41.48.41h3.840c.24 0 .44-.17.47-.41l.36-2.54c.59-.24 1.13-.56 1.62-.94l2.39.96c.22.08.47 0 .59-.22l1.92-3.32c.12-.22.07-.47-.12-.61l-2.01-1.58zM12 15.6c-1.98 0-3.6-1.62-3.6-3.6s1.62-3.6 3.6-3.6 3.6 1.62 3.6 3.6-1.62 3.6-3.6 3.6z" fill="#fff"/></svg><div class="abs" style="left:6px;top:508px;width:36px;height:0;border-top:1px dotted #6a78a0"></div><svg class="abs" style="left:12px;top:521px" width="24" height="24" viewBox="0 0 24 24"><path d="M12 1.5L4 5v6c0 5.2 3.4 10 8 11.5 4.6-1.5 8-6.3 8-11.5V5z" fill="#fff"/><circle cx="17" cy="18" r="4.5" fill="#37456f"/><circle cx="17" cy="18" r="3.6" fill="#fff"/><circle cx="17" cy="16.9" r="1" fill="#37456f"/><path d="M15.2 20a1.8 1.5 0 0 1 3.6 0z" fill="#37456f"/></svg></div>
</body></html>
